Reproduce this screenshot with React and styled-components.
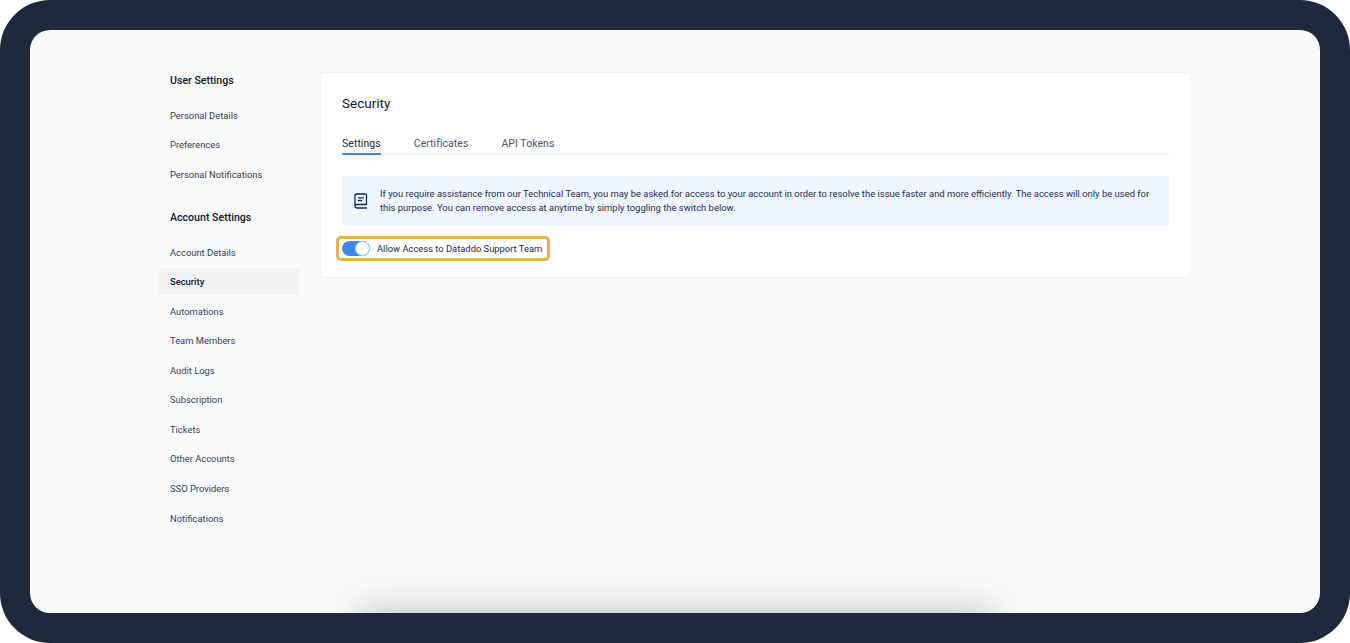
import styled, { createGlobalStyle } from "styled-components";

const GlobalStyle = createGlobalStyle`
  html, body {
    margin: 0;
    height: 100%;
    background: #fff;
  }
  body {
    font-family: Roboto, "Liberation Sans", sans-serif;
    overflow: hidden;
  }
`;

const Frame = styled.div`
  box-sizing: border-box;
  width: 1350px;
  height: 643px;
  padding: 30px;
  background: #1e293b;
  border-radius: 50px;
`;

const Screen = styled.div`
  position: relative;
  height: 583px;
  display: flex;
  align-items: flex-start;
  gap: 21px;
  padding: 42px 0 0 129px;
  box-sizing: border-box;
  background: #f9fafc;
  border-radius: 20px;
  overflow: hidden;
`;

const BottomShadow = styled.div`
  position: absolute;
  left: 333px;
  bottom: -30px;
  width: 625px;
  height: 30px;
  box-shadow: 0 0 36px 4px rgba(70, 75, 70, 0.3);
  background: #888;
`;

const Sidebar = styled.nav`
  width: 140px;
  flex: none;
  display: flex;
  flex-direction: column;
`;

const SideHeading = styled.h3`
  margin: ${(p) => (p.$second ? "19px" : "0")} 0 12.5px 11px;
  font-size: 10.6px;
  line-height: 17px;
  font-weight: 500;
  color: #0f172a;
`;

const SideItem = styled.a`
  height: 27px;
  margin-bottom: 2.55px;
  padding-left: 11px;
  display: flex;
  align-items: center;
  font-size: 9.4px;
  border-radius: 3px;
  color: ${(p) => (p.$active ? "#0f172a" : "#334155")};
  font-weight: ${(p) => (p.$active ? 500 : 400)};
  background: ${(p) => (p.$active ? "#f1f3f5" : "transparent")};
`;

const Card = styled.section`
  width: 871px;
  height: 206px;
  box-sizing: border-box;
  padding: 20px 21px 0 21px;
  background: #fff;
  border: 1px solid #f2f5f8;
  border-radius: 4px;
`;

const Title = styled.h2`
  margin: 0 0 16.5px;
  font-size: 13.5px;
  line-height: 20px;
  font-weight: 400;
  color: #0f172a;
`;

const Tabs = styled.div`
  display: flex;
  gap: 33px;
  border-bottom: 2px solid #f4f5f7;
  height: 23px;
`;

const Tab = styled.div`
  height: 25px;
  box-sizing: border-box;
  padding-top: 7px;
  font-size: 10.5px;
  letter-spacing: 0.05px;
  line-height: 13px;
  color: ${(p) => (p.$active ? "#1e293b" : "#475569")};
  border-bottom: ${(p) => (p.$active ? "2px solid #3f87e8" : "none")};
`;

const Notice = styled.div`
  margin-top: 21px;
  height: 50px;
  display: flex;
  align-items: center;
  gap: 12px;
  padding: 0 11px 0 12px;
  box-sizing: border-box;
  background: #eff6ff;
  border-radius: 3px;
  font-size: 9.45px;
  line-height: 14px;
  color: #1e2f50;
`;

const NoticeIcon = styled.svg`
  width: 14px;
  height: 16px;
  flex: none;
`;

const ToggleRow = styled.div`
  margin: 10px 0 0 -6px;
  width: 214px;
  height: 25px;
  box-sizing: border-box;
  display: flex;
  align-items: center;
  gap: 7px;
  padding-left: 3px;
  border: 3px solid #e8b04e;
  border-radius: 5px;
  font-size: 9.4px;
  color: #1e293b;
  white-space: nowrap;
`;

const Toggle = styled.span`
  position: relative;
  width: 28px;
  height: 15px;
  border-radius: 8px;
  background: #3f87e8;
  flex: none;
`;

const Knob = styled.span`
  position: absolute;
  right: 0;
  top: 0;
  width: 15px;
  height: 15px;
  box-sizing: border-box;
  border-radius: 50%;
  background: #fff;
  border: 1px solid #a9cdf5;
`;

const userItems = ["Personal Details", "Preferences", "Personal Notifications"];
const accountItems = [
  "Account Details",
  "Security",
  "Automations",
  "Team Members",
  "Audit Logs",
  "Subscription",
  "Tickets",
  "Other Accounts",
  "SSO Providers",
  "Notifications",
];

const App = () => {
  return (
    <>
      <GlobalStyle />
      <Frame>
        <Screen>
          <Sidebar>
            <SideHeading>User Settings</SideHeading>
            {userItems.map((item) => (
              <SideItem key={item}>{item}</SideItem>
            ))}
            <SideHeading $second>Account Settings</SideHeading>
            {accountItems.map((item) => (
              <SideItem key={item} $active={item === "Security"}>
                {item}
              </SideItem>
            ))}
          </Sidebar>
          <Card>
            <Title>Security</Title>
            <Tabs>
              <Tab $active>Settings</Tab>
              <Tab>Certificates</Tab>
              <Tab>API Tokens</Tab>
            </Tabs>
            <Notice>
              <NoticeIcon viewBox="0 0 14 16" fill="none" stroke="#0f2a52" strokeWidth="1.3" strokeLinecap="round" strokeLinejoin="round">
                <path d="M1 13V3a2 2 0 0 1 2-2h8.5a1 1 0 0 1 1 1v9.5H3A2 2 0 0 0 1 13.2 1.8 1.8 0 0 0 3 15h9.5" />
                <path d="M4.5 4.8h5M4.5 7.5h3" />
              </NoticeIcon>
              <span>
                If you require assistance from our Technical Team, you may be asked for access to your account in order to resolve the issue faster and more efficiently. The access will only be used for this purpose. You can remove access at anytime by simply toggling the switch below.
              </span>
            </Notice>
            <ToggleRow>
              <Toggle>
                <Knob />
              </Toggle>
              Allow Access to Dataddo Support Team
            </ToggleRow>
          </Card>
          <BottomShadow />
        </Screen>
      </Frame>
    </>
  );
};

export default App;
